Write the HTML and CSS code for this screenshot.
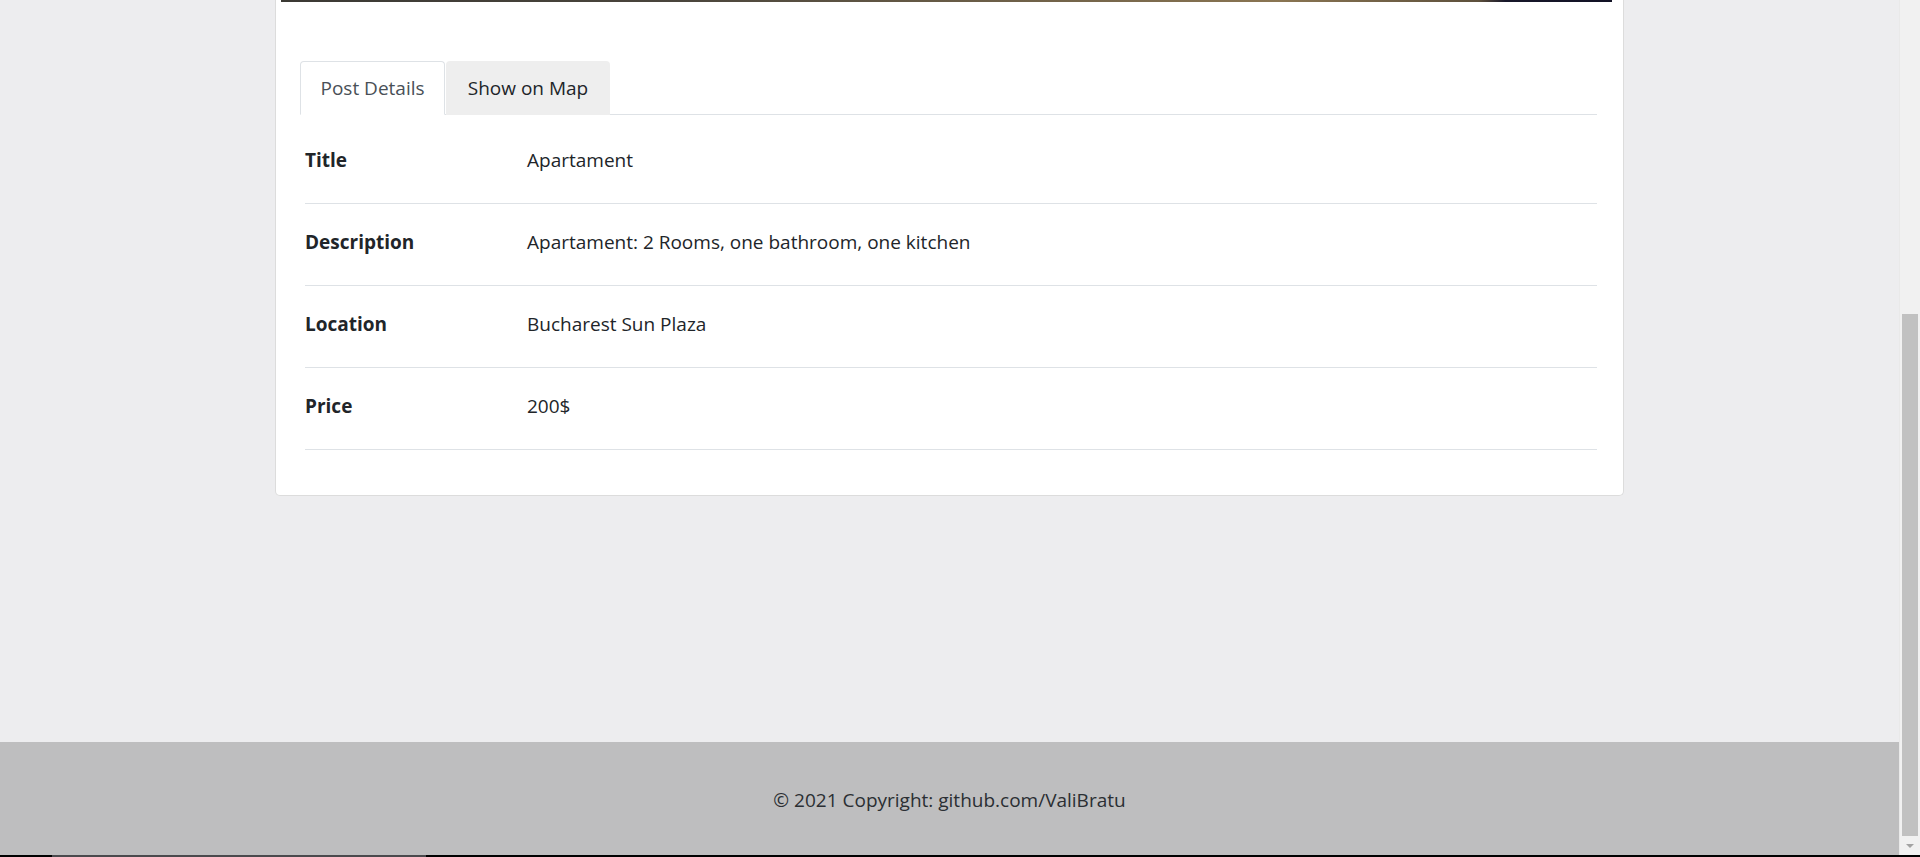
FILE: index.html
```html
<!DOCTYPE html>
<html lang="en">
<head>
<meta charset="utf-8">
<title>Post Details</title>
<link rel="stylesheet" href="styles.css">
</head>
<body>
<div class="viewport">
  <div class="page">
    <main class="main">
      <div class="card">
        <div class="photo"></div>
        <div class="card-body">
          <ul class="tabs">
            <li class="tab active">Post Details</li>
            <li class="tab">Show on Map</li>
          </ul>
          <div class="details">
            <div class="row"><div class="label">Title</div><div class="value">Apartament</div></div>
            <div class="row"><div class="label">Description</div><div class="value">Apartament: 2 Rooms, one bathroom, one kitchen</div></div>
            <div class="row"><div class="label">Location</div><div class="value">Bucharest Sun Plaza</div></div>
            <div class="row"><div class="label">Price</div><div class="value">200$</div></div>
          </div>
        </div>
      </div>
    </main>
    <footer class="footer">© 2021 Copyright: github.com/ValiBratu</footer>
  </div>
  <div class="scrollbar">
    <div class="scroll-track"><div class="scroll-thumb"></div></div>
    <div class="scroll-arrow"></div>
  </div>
</div>
<div class="taskbar"><div class="taskbar-item"></div></div>
</body>
</html>
```
FILE: styles.css
```css
html, body {
  margin: 0;
  padding: 0;
}
body {
  background: #ededef;
  font-family: "Open Sans", "Noto Sans", sans-serif;
  color: #212529;
  overflow: hidden;
}
.viewport {
  display: flex;
  height: 855px;
}
.page {
  flex: 1;
  display: flex;
  flex-direction: column;
  min-width: 0;
}
.main {
  flex: 1;
  display: flex;
  justify-content: center;
  align-items: flex-start;
}
.card {
  width: 1342px;
  background: #fff;
  border: 1px solid #dcdcdc;
  border-top: none;
  border-radius: 0 0 5px 5px;
  padding: 0 0 0 5px;
  box-sizing: content-box;
}
.photo {
  width: 1331px;
  height: 2px;
  background: linear-gradient(90deg, #3b3934 0%, #4a453c 30%, #6e6048 55%, #8a7552 75%, #5d503c 90%, #17172a 92%, #121225 100%);
}
.card-body {
  padding: 59px 26px 45px 19px;
}
.tabs {
  list-style: none;
  margin: 0;
  padding: 0;
  display: flex;
  border-bottom: 1px solid #dee2e6;
}
.tab {
  font-size: 19px;
  line-height: 30px;
  padding: 11px 0;
  margin-bottom: -1px;
  border: 1px solid transparent;
  border-radius: 4px 4px 0 0;
  background: #eeeeee;
  color: #212529;
  width: 162px;
  text-align: center;
  box-sizing: content-box;
}
.tab:nth-child(2) {
  margin-left: 1px;
}
.tab.active {
  background: #fff;
  border-color: #dee2e6 #dee2e6 #fff;
  color: #495057;
  width: 143px;
}
.details {
  margin: 7px 0 0 5px;
}
.row {
  display: flex;
  padding: 23px 0 28px;
  line-height: 30px;
  font-size: 19px;
  border-bottom: 1px solid #dee2e6;
}
.label {
  width: 222px;
  font-weight: 700;
}
.value {
  flex: 1;
}
.footer {
  height: 113px;
  background: #bebebf;
  display: flex;
  align-items: center;
  justify-content: center;
  font-size: 19px;
  color: #2b2f33;
  padding-top: 3px;
  box-sizing: border-box;
}
.scrollbar {
  width: 21px;
  background: #f1f1f1;
  border-left: 1px solid #e9e9e9;
  box-sizing: border-box;
  display: flex;
  flex-direction: column;
  padding: 0 1px 0 1px;
}
.scroll-track {
  flex: 1;
  display: flex;
  flex-direction: column;
  justify-content: flex-end;
}
.scroll-thumb {
  height: 522px;
  background: #c1c1c1;
  margin: 0 1px 0 1px;
}
.scroll-arrow {
  height: 19px;
  display: flex;
  align-items: center;
  justify-content: center;
}
.scroll-arrow::before {
  content: "";
  width: 0;
  height: 0;
  border-left: 4px solid transparent;
  border-right: 4px solid transparent;
  border-top: 4px solid #a3a3a3;
}
.taskbar {
  height: 2px;
  background: #000;
  display: flex;
}
.taskbar-item {
  margin-left: 52px;
  width: 374px;
  background: #4a4a4d;
}
```
